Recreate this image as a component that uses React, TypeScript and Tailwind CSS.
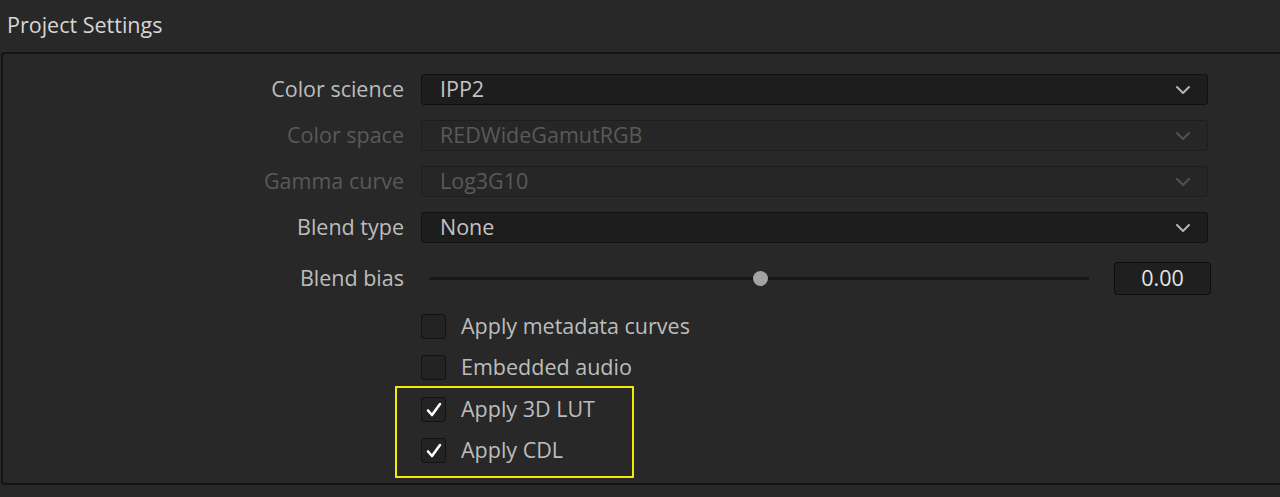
import React, { useState } from 'react';

const font = { fontFamily: '"Open Sans", "Noto Sans", sans-serif' };

const Chevron = ({ dim }: { dim?: boolean }) => (
  <svg width="16" height="10" viewBox="0 0 16 10" className={dim ? 'text-[#525252]' : 'text-[#b4b4b4]'}>
    <path d="M2 2 L8 8 L14 2" fill="none" stroke="currentColor" strokeWidth="2" strokeLinecap="round" strokeLinejoin="round" />
  </svg>
);

const SelectRow = ({ label, value, disabled }: { label: string; value: string; disabled?: boolean }) => (
  <div className="flex items-center h-[31px]">
    <div className={`w-[401px] text-right text-[21.5px] ${disabled ? 'text-[#595959]' : 'text-[#bdbdbd]'}`}>{label}</div>
    <div
      className={`ml-[17px] w-[787px] h-[31px] rounded-[3px] flex items-center justify-between pl-[18px] pr-[16px] border ${
        disabled ? 'bg-[#262626] border-[#1e1e1e]' : 'bg-[#1d1d1d] border-[#101010]'
      }`}
    >
      <span className={`text-[21.5px] ${disabled ? 'text-[#595959]' : 'text-[#c2c2c2]'}`}>{value}</span>
      <Chevron dim={disabled} />
    </div>
  </div>
);

const Check = ({ label, checked, onToggle }: { label: string; checked: boolean; onToggle: () => void }) => (
  <div className="flex items-center h-[25px] cursor-pointer" onClick={onToggle}>
    <div className="w-[25px] h-[25px] rounded-[3px] bg-[#232323] border border-[#121212] flex items-center justify-center">
      {checked && (
        <svg width="18" height="18" viewBox="0 0 18 18">
          <path d="M3 9.5 L7 14 L15 3" fill="none" stroke="#ffffff" strokeWidth="2.6" strokeLinecap="round" strokeLinejoin="round" />
        </svg>
      )}
    </div>
    <span className="ml-[15px] text-[21.5px] text-[#bdbdbd]">{label}</span>
  </div>
);

export default function App() {
  const [checks, setChecks] = useState({ metadata: false, audio: false, lut: true, cdl: true });
  const toggle = (k: keyof typeof checks) => setChecks({ ...checks, [k]: !checks[k] });

  return (
    <div className="h-[497px] w-[1280px] bg-[#282828] overflow-hidden" style={font}>
      <div className="h-[52px] flex items-center pl-[7px] pb-[1px]">
        <h1 className="text-[21.5px] text-[#d6d6d6]">Project Settings</h1>
      </div>
      <div className="ml-[1px] h-[433px] border-l-2 border-t-2 border-b-2 border-[#141414] rounded-tl-[4px] rounded-bl-[4px] bg-[#282828] pt-[20px] flex flex-col">
        <div className="flex flex-col gap-[15px]">
          <SelectRow label="Color science" value="IPP2" />
          <SelectRow label="Color space" value="REDWideGamutRGB" disabled />
          <SelectRow label="Gamma curve" value="Log3G10" disabled />
          <SelectRow label="Blend type" value="None" />
        </div>

        <div className="flex items-center h-[33px] mt-[19px]">
          <div className="w-[401px] text-right text-[21.5px] text-[#bdbdbd]">Blend bias</div>
          <div className="ml-[25px] w-[660px] h-[3px] bg-[#181818] relative">
            <div className="absolute left-[324px] -top-[6px] w-[15px] h-[15px] rounded-full bg-[#a3a3a3]" />
          </div>
          <div className="ml-[25px] w-[97px] h-[33px] rounded-[3px] bg-[#1f1f1f] border border-[#0e0e0e] flex items-center justify-center">
            <span className="text-[21.5px] text-[#e4e4e4]">0.00</span>
          </div>
        </div>

        <div className="flex flex-col pl-[418px] mt-[19px] gap-[16px]">
          <Check label="Apply metadata curves" checked={checks.metadata} onToggle={() => toggle('metadata')} />
          <Check label="Embedded audio" checked={checks.audio} onToggle={() => toggle('audio')} />
        </div>

        <div className="ml-[392px] mt-[6px] w-[239px] h-[92px] border-2 border-[#f2ea00] flex flex-col pl-[24px] pt-[9px] gap-[16px]">
          <Check label="Apply 3D LUT" checked={checks.lut} onToggle={() => toggle('lut')} />
          <Check label="Apply CDL" checked={checks.cdl} onToggle={() => toggle('cdl')} />
        </div>
      </div>
    </div>
  );
}
